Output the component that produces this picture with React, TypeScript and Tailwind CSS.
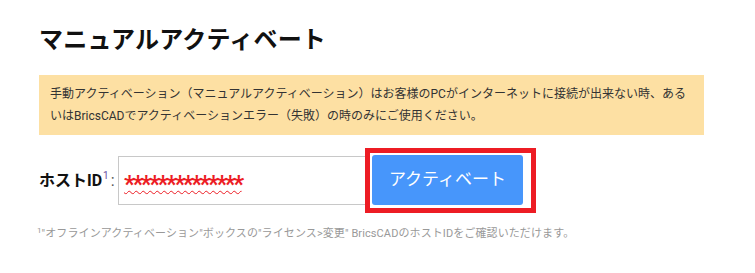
const font = "font-['Roboto','Noto_Sans_CJK_JP',sans-serif]";

export default function App() {
  return (
    <div className={`${font} h-[273px] w-[755px] bg-white`}>
      <div className="ml-[39px] w-[665px] pt-[24px]">
        <h1 className="text-[24px] font-bold leading-[32px] tracking-[0.2px] text-[#111]">
          マニュアルアクティベート
        </h1>

        <div className="mt-[19px] bg-[#fde0a3] px-[11px] py-[8px] text-[12px] leading-[22px] text-[#333]">
          手動アクティベーション（マニュアルアクティベーション）はお客様のPCがインターネットに接続が出来ない時、あるいはBricsCADでアクティベーションエラー（失敗）の時のみにご使用ください。
        </div>

        <div className="mt-[13px] flex items-center">
          <label className="flex w-[79px] items-center text-[16px] font-bold text-[#111]">
            ホストID
            <sup className="ml-px text-[10px] font-normal text-[#6b4fa0]">1</sup>
            <span className="ml-[2px] font-normal text-[#555]">:</span>
          </label>
          <div className="flex h-[49px] w-[248px] items-center border border-[#c8c8c8] bg-white pl-[5px] pt-[6px]">
            <span className="text-[24px] font-bold leading-[24px] tracking-[-2.5px] text-[#ec1c24] underline decoration-wavy decoration-[#ec1c24] decoration-1 underline-offset-[-2px]">
              **************
            </span>
          </div>
          <div className="-ml-px border-[5px] border-[#ed1c24] bg-white pb-[3px] pl-[2px] pr-[8px] pt-[2px]">
            <button className="flex h-[50px] w-[151px] items-center justify-center rounded-[3px] bg-[#4796fb] text-[17px] text-white">
              アクティベート
            </button>
          </div>
        </div>

        <p className="-ml-[2px] mt-[13px] text-[11px] tracking-[0.1px] text-[#999]">
          <sup className="text-[8px]">1</sup>"オフラインアクティベーション"ボックスの"ライセンス&gt;変更" BricsCADのホストIDをご確認いただけます。
        </p>
      </div>
    </div>
  );
}
